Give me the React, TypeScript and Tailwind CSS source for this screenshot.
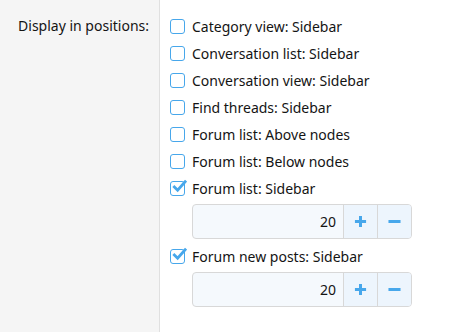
import React from 'react';

const Check: React.FC<{ checked: boolean }> = ({ checked }) => (
  <span className="relative w-[15px] h-[15px] shrink-0 rounded-[3px] border-[1.5px] border-[#47a7eb] bg-white">
    {checked && (
      <svg viewBox="0 0 16 16" className="absolute left-[1px] top-[-3px] w-[15px] h-[15px]">
        <path d="M2.5 8.5 L6 12 L14 3" fill="none" stroke="#47a7eb" strokeWidth="3" strokeLinecap="square" />
      </svg>
    )}
  </span>
);

const Spinner: React.FC<{ value: number }> = ({ value }) => (
  <div className="flex ml-[22px] mt-[4px] mb-[6px] w-[220px] h-[35px] rounded-[4px] border border-[#d8d8d8] bg-[#f5f9fd] overflow-hidden">
    <div className="flex-1 flex items-center justify-end pr-[7px] text-[#141414]">{value}</div>
    <div className="w-[34px] flex items-center justify-center border-l border-[#d8d8d8] bg-[#edf5fd]">
      <svg viewBox="0 0 14 14" className="w-[13px] h-[13px]">
        <path d="M7 1 V13 M1 7 H13" stroke="#47a7eb" strokeWidth="3.2" />
      </svg>
    </div>
    <div className="w-[34px] flex items-center justify-center border-l border-[#d8d8d8] bg-[#edf5fd]">
      <svg viewBox="0 0 14 14" className="w-[13px] h-[13px]">
        <path d="M0.5 7 H13.5" stroke="#47a7eb" strokeWidth="3.2" />
      </svg>
    </div>
  </div>
);

export default function App() {
  const positions = [
    { label: 'Category view: Sidebar', checked: false },
    { label: 'Conversation list: Sidebar', checked: false },
    { label: 'Conversation view: Sidebar', checked: false },
    { label: 'Find threads: Sidebar', checked: false },
    { label: 'Forum list: Above nodes', checked: false },
    { label: 'Forum list: Below nodes', checked: false },
    { label: 'Forum list: Sidebar', checked: true, value: 20 },
    { label: 'Forum new posts: Sidebar', checked: true, value: 20 },
  ];

  return (
    <div className="flex w-[467px] h-[332px] bg-white text-[14px] text-[#141414]" style={{ fontFamily: '"Noto Sans", sans-serif' }}>
      <div className="w-[160px] shrink-0 bg-[#f5f5f5] border-r border-[#e0e0e0] pt-[15px] pr-[10px] text-right">
        <span className="leading-[22px]">Display in positions:</span>
      </div>
      <div className="pl-[10px] pt-[15px]">
        {positions.map((p, i) => (
          <div key={i}>
            <label className="flex items-center gap-[7px] h-[22px] mb-[5px]">
              <Check checked={p.checked} />
              <span>{p.label}</span>
            </label>
            {p.value !== undefined && <Spinner value={p.value} />}
          </div>
        ))}
      </div>
    </div>
  );
}
